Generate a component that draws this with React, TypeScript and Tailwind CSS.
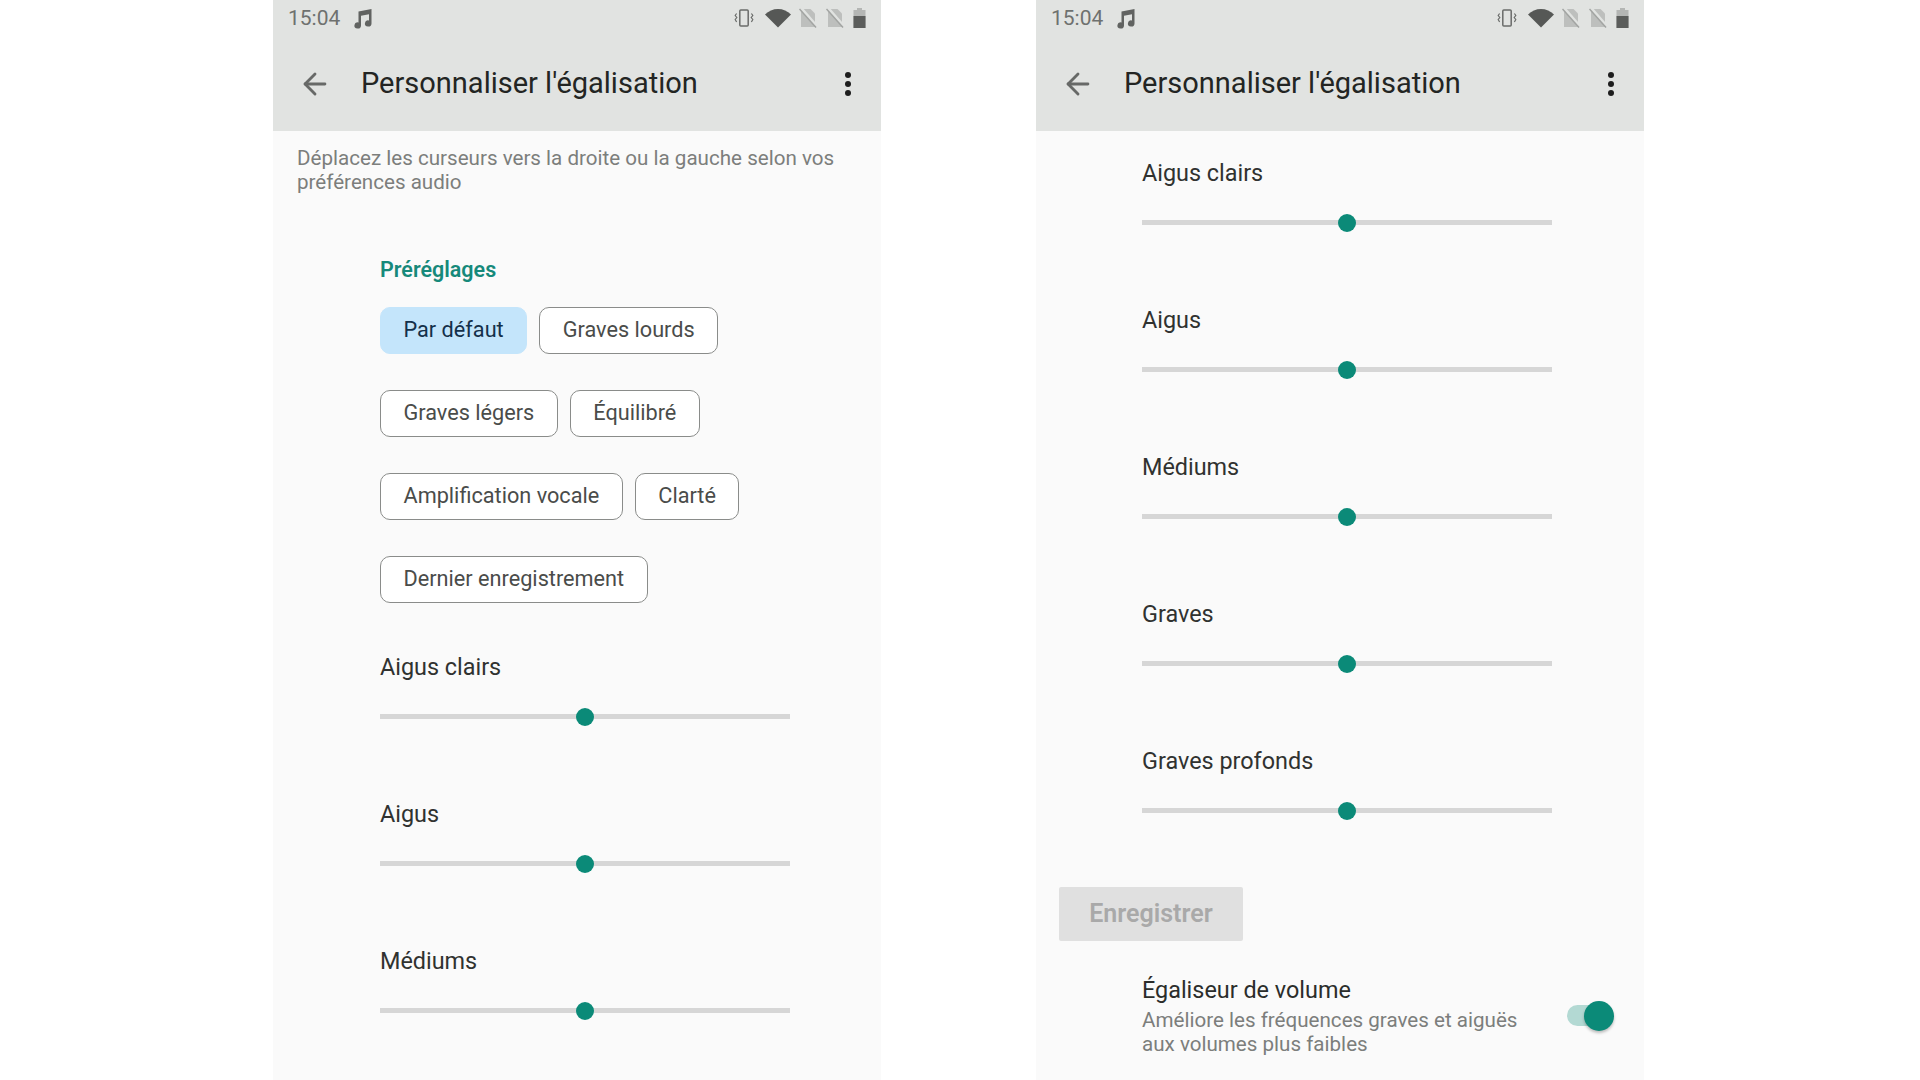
import { ArrowLeft } from "lucide-react";

const FONT = "font-['Roboto','Liberation_Sans',sans-serif]";

const PRESET_ROWS = [
  ["Par défaut", "Graves lourds"],
  ["Graves légers", "Équilibré"],
  ["Amplification vocale", "Clarté"],
  ["Dernier enregistrement"],
];

function VibrateIcon() {
  return (
    <svg width="22" height="22" viewBox="0 0 22 22" fill="none" stroke="#6a6c6a" strokeWidth="1.5">
      <rect x="6.8" y="3" width="8.4" height="16" rx="1" />
      <path d="M3.6 6.5 2.2 8.5l1.6 2-1.6 2 1.4 2.5M18.4 6.5l1.4 2-1.6 2 1.6 2-1.4 2.5" strokeWidth="1.2" />
    </svg>
  );
}

function WifiIcon() {
  return (
    <svg width="26" height="20" viewBox="0 0 26 20">
      <path d="M0 6.500C3.500 3 8 1 13 1s9.500 2 13 5.500L13 19.500z" fill="#565856" />
    </svg>
  );
}

function SimOffIcon() {
  return (
    <svg width="18" height="20" viewBox="0 0 18 20">
      <path d="M2 1h9.500L16 5.500V19H2z" fill="#bdbfbd" />
      <path d="M1.500 -0.500 18 18.500" stroke="#e1e3e1" strokeWidth="3" />
      <path d="M0.500 1 17 19.500" stroke="#a2a4a2" strokeWidth="1.500" />
    </svg>
  );
}

function BatteryIcon() {
  return (
    <svg width="13" height="20" viewBox="0 0 13 20">
      <path d="M4 0h5v2h3.500v18H.5V2H4z" fill="#b4b6b4" />
      <rect x="0.500" y="8" width="12" height="12" fill="#5b5d5b" />
    </svg>
  );
}

function StatusBar() {
  return (
    <div className="flex h-[36px] items-center pl-[15px] pr-[15px]">
      <span className="pt-[1px] text-[21px] text-[#6f716f]">15:04</span>
      <svg className="ml-[12px]" width="21" height="22" viewBox="0 0 21 22" fill="#616361">
        <path d="M6.500 4.500 19.500 2v14.500a3.300 3.100 0 1 1-2.500-3V7.300L9 8.800V18.500a3.300 3.100 0 1 1-2.500-3z" />
      </svg>
      <div className="ml-auto flex items-center">
        <VibrateIcon />
        <span className="ml-[10px] flex"><WifiIcon /></span>
        <span className="ml-[8px] flex"><SimOffIcon /></span>
        <span className="ml-[9px] flex"><SimOffIcon /></span>
        <span className="ml-[9px] flex"><BatteryIcon /></span>
      </div>
    </div>
  );
}

function Header() {
  return (
    <div className="h-[131px] shrink-0 bg-[#e1e3e1]">
      <StatusBar />
      <div className="flex h-[95px] items-center pl-[25px] pr-[30px] pt-[1px]">
        <ArrowLeft size={34} strokeWidth={2} className="text-[#676967]" />
        <h1 className="ml-[29px] text-[29px] font-normal text-[#232523]">
          Personnaliser l'égalisation
        </h1>
        <div className="ml-auto flex flex-col gap-[3px]">
          <span className="size-[6px] rounded-full bg-[#1d1d1d]" />
          <span className="size-[6px] rounded-full bg-[#1d1d1d]" />
          <span className="size-[6px] rounded-full bg-[#1d1d1d]" />
        </div>
      </div>
    </div>
  );
}

function BandSlider({ label }: { label: string }) {
  return (
    <div className="h-[147px] w-[410px]">
      <div className="text-[23.400px] leading-[30px] text-[#303230]">{label}</div>
      <div className="relative mt-[32px] h-[5px] bg-[#d6d6d6]">
        <span className="absolute left-1/2 top-1/2 size-[18px] -translate-x-1/2 -translate-y-1/2 rounded-full bg-[#0b8a78]" />
      </div>
    </div>
  );
}

function Phone({ children }: { children: React.ReactNode }) {
  return (
    <div className="flex h-[1080px] w-[608px] flex-col overflow-hidden bg-[#fafafa]">
      <Header />
      {children}
    </div>
  );
}

function PresetChip({ label, active }: { label: string; active: boolean }) {
  return (
    <button
      className={
        active
          ? "h-[47px] rounded-[10px] border border-[#c4e5fb] bg-[#c4e5fb] px-[22.500px] text-[21.700px] text-[#14304a]"
          : "h-[47px] rounded-[10px] border-[1.5px] border-[#8a8c8a] bg-white px-[22.500px] text-[21.700px] text-[#4a4c4a]"
      }
    >
      {label}
    </button>
  );
}

export default function App() {
  return (
    <div className={`flex h-[1080px] gap-[155px] overflow-hidden bg-white pl-[273px] ${FONT}`}>
      <Phone>
        <p className="pl-[24px] pr-[30px] pt-[15px] text-[20.600px] leading-[24px] text-[#7c7e7c]">
          Déplacez les curseurs vers la droite ou la gauche selon vos préférences audio
        </p>
        <div className="pl-[107px] pt-[62px]">
          <h2 className="text-[21.500px] font-semibold leading-[28px] text-[#16897a]">Préréglages</h2>
          <div className="mt-[23px] flex flex-col gap-[36px]">
            {PRESET_ROWS.map((row) => (
              <div key={row[0]} className="flex gap-[12px]">
                {row.map((name) => (
                  <PresetChip key={name} label={name} active={name === "Par défaut"} />
                ))}
              </div>
            ))}
          </div>
          <div className="mt-[49px]">
            <BandSlider label="Aigus clairs" />
            <BandSlider label="Aigus" />
            <BandSlider label="Médiums" />
          </div>
        </div>
      </Phone>
      <Phone>
        <div className="pl-[106px] pt-[27px]">
          <BandSlider label="Aigus clairs" />
          <BandSlider label="Aigus" />
          <BandSlider label="Médiums" />
          <BandSlider label="Graves" />
          <BandSlider label="Graves profonds" />
        </div>
        <div className="-mt-[6px] pl-[23px]">
          <div className="flex h-[54px] w-[184px] items-center justify-center rounded-[2px] bg-[#e0e0e0] text-[25px] font-semibold text-[#a9a9a9]">
            Enregistrer
          </div>
        </div>
        <div className="flex items-center pl-[106px] pr-[30px] pt-[34px]">
          <div className="w-[400px]">
            <div className="text-[23.400px] leading-[30px] text-[#2b2d2b]">Égaliseur de volume</div>
            <div className="mt-[3px] text-[20.600px] leading-[24px] text-[#7c7e7c]">
              Améliore les fréquences graves et aiguës aux volumes plus faibles
            </div>
          </div>
          <div className="ml-auto flex items-center">
            <span className="h-[21px] w-[32px] rounded-full bg-[#b3d9d3]" />
            <span className="-ml-[15px] size-[30px] rounded-full bg-[#0b8a78] shadow-[0_2px_3px_rgba(0,0,0,0.25)]" />
          </div>
        </div>
      </Phone>
    </div>
  );
}
